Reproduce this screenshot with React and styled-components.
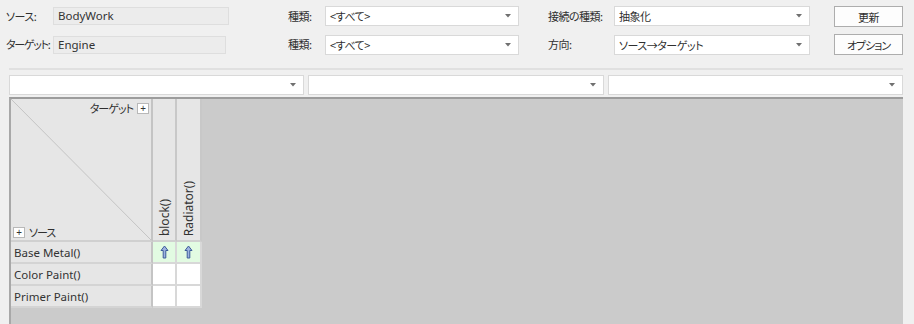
import styled, { createGlobalStyle } from "styled-components"

const Global = createGlobalStyle`
	html, body {
		margin: 0;
		background: #f0f0f0;
	}
	body {
		font-family: "Noto Sans", "Noto Sans CJK JP", sans-serif;
		font-size: 11.5px;
		color: #333;
		font-feature-settings: "palt";
	}
`

// Japanese runs are narrower in the original UI font
const Jp = styled.span`
	font-family: "Noto Sans CJK JP", sans-serif;
	font-size: 11px;
	letter-spacing: ${p => p.tight || "-0.5px"};
	white-space: nowrap;
	color: #2f2f2f;
`

const Arrow = () => (
	<svg width="9" height="14" viewBox="0 0 9 14">
		<path d="M4.5 1 L8 5.5 L5.8 5.5 L5.8 13 L3.2 13 L3.2 5.5 L1 5.5 Z" fill="#9db3e0" stroke="#3d5c9a" strokeWidth="1" strokeLinejoin="round" />
	</svg>
)

const Caret = () => (
	<svg width="6" height="4" viewBox="0 0 6 4">
		<path d="M0 0 L6 0 L3 3.5 Z" fill="#707070" />
	</svg>
)

const Combo = ({ children }) => (
	<ComboBox>
		<span>{children}</span>
		<Caret />
	</ComboBox>
)

const App = () => {
	const cols = ["block()", "Radiator()"]
	const rows = [
		{ name: "Base Metal()", links: [true, true] },
		{ name: "Color Paint()", links: [false, false] },
		{ name: "Primer Paint()", links: [false, false] },
	]

	return (
		<Page>
			<Global />
			<Form>
				<Group cols="47px 176px">
					<Label><Jp>ソース:</Jp></Label>
					<Field>BodyWork</Field>
					<Label><Jp tight="-1.3px">ターゲット:</Jp></Label>
					<Field narrow>Engine</Field>
				</Group>
				<Group cols="37px 194px" ml="59px">
					<Label><Jp>種類:</Jp></Label>
					<Combo><Jp>&lt;すべて&gt;</Jp></Combo>
					<Label><Jp>種類:</Jp></Label>
					<Combo><Jp>&lt;すべて&gt;</Jp></Combo>
				</Group>
				<Group cols="66px 196px" ml="29px">
					<Label><Jp>接続の種類:</Jp></Label>
					<Combo><Jp>抽象化</Jp></Combo>
					<Label><Jp>方向:</Jp></Label>
					<Combo><Jp>ソース→ターゲット</Jp></Combo>
				</Group>
				<Group cols="69px" ml="24px">
					<Button><Jp>更新</Jp></Button>
					<Button><Jp tight="-1px">オプション</Jp></Button>
				</Group>
			</Form>
			<Separator />
			<FilterRow>
				<Combo />
				<Combo />
				<Combo />
			</FilterRow>
			<MatrixArea>
				<Matrix>
					<Corner>
						<svg width="140" height="141" viewBox="0 0 140 141" preserveAspectRatio="none">
							<line x1="0" y1="0" x2="140" y2="141" stroke="#c4c4c4" strokeWidth="1" />
						</svg>
						<TargetTag>
							<Jp tight="-1px">ターゲット</Jp>
							<PlusBox>+</PlusBox>
						</TargetTag>
						<SourceTag>
							<PlusBox>+</PlusBox>
							<Jp tight="-1px">ソース</Jp>
						</SourceTag>
					</Corner>
					{cols.map(c => (
						<ColHead key={c}>
							<Vertical>{c}</Vertical>
						</ColHead>
					))}
					{rows.map(r => [
						<RowHead key={r.name}>{r.name}</RowHead>,
						...r.links.map((l, i) => (
							<Cell key={r.name + i} $linked={l}>
								{l && <Arrow />}
							</Cell>
						)),
					])}
				</Matrix>
			</MatrixArea>
		</Page>
	)
}

const Page = styled.div`
	width: 914px;
	height: 324px;
	overflow: hidden;
	display: flex;
	flex-direction: column;
`

const Form = styled.div`
	display: flex;
	padding: 6px 0 0 6px;
	height: 55px;
	box-sizing: border-box;
	flex-shrink: 0;
`

const Group = styled.div`
	display: grid;
	grid-template-columns: ${p => p.cols};
	grid-template-rows: 20px 21px;
	row-gap: 8px;
	align-items: center;
	margin-left: ${p => p.ml || 0};
`

const Label = styled.div`
	white-space: nowrap;
	line-height: 20px;
`

const Field = styled.div`
	height: 18px;
	width: ${p => (p.narrow ? "173px" : "176px")};
	box-sizing: border-box;
	border: 1px solid #dedede;
	background: #ececec;
	padding-left: 4px;
	line-height: 16px;
	color: #333;
`

const ComboBox = styled.div`
	height: 20px;
	box-sizing: border-box;
	border: 1px solid #d9d9d9;
	background: #fff;
	display: flex;
	align-items: center;
	justify-content: space-between;
	padding: 0 7px 0 4px;
	color: #333;
	flex: 1;
	span {
		white-space: nowrap;
	}
`

const Button = styled.div`
	height: 21px;
	box-sizing: border-box;
	border: 1px solid #adadad;
	background: #fdfdfd;
	display: flex;
	align-items: center;
	justify-content: center;
	align-self: start;
`

const Separator = styled.div`
	height: 2px;
	flex-shrink: 0;
	background: #e0e0e0;
	margin: 13px 11px 5px 9px;
`

const FilterRow = styled.div`
	display: flex;
	gap: 4px;
	margin: 0 11px 0 9px;
	flex-shrink: 0;
`

const MatrixArea = styled.div`
	flex: 1;
	margin: 2px 11px 0 9px;
	background: #cbcbcb;
	border-top: 2px solid #9c9c9c;
	border-left: 2px solid #a8a8a8;
`

const Matrix = styled.div`
	display: grid;
	grid-template-columns: 142px 24px 25px;
	grid-template-rows: 143px 22px 22px 22px;
	width: max-content;
`

const Corner = styled.div`
	position: relative;
	background: #e6e6e6;
	border-right: 2px solid #c4c4c4;
	border-bottom: 2px solid #d0d0d0;
	svg {
		display: block;
	}
`

const PlusBox = styled.span`
	display: inline-flex;
	align-items: center;
	justify-content: center;
	width: 12px;
	height: 11px;
	box-sizing: border-box;
	border: 1px solid #b8b8b8;
	background: #fff;
	font-size: 10px;
	line-height: 1;
	color: #333;
`

const TargetTag = styled.div`
	position: absolute;
	top: 1px;
	right: 2px;
	display: flex;
	align-items: center;
	gap: 4px;
`

const SourceTag = styled.div`
	position: absolute;
	bottom: 0;
	left: 2px;
	display: flex;
	align-items: center;
	gap: 4px;
`

const ColHead = styled.div`
	background: #e6e6e6;
	border-right: 2px solid #c8c8c8;
	border-bottom: 2px solid #d0d0d0;
	display: flex;
	align-items: flex-end;
	justify-content: center;
	padding-bottom: 4px;
	font-size: 12px;
`

const Vertical = styled.div`
	writing-mode: vertical-rl;
	transform: rotate(180deg);
	color: #333;
	white-space: nowrap;
`

const RowHead = styled.div`
	background: #e6e6e6;
	border-right: 2px solid #c4c4c4;
	border-bottom: 2px solid #d4d4d4;
	padding-left: 3px;
	display: flex;
	align-items: center;
	color: #333;
`

const Cell = styled.div`
	background: ${p => (p.$linked ? "#e2fbe2" : "#fff")};
	border-right: 2px solid #d8d8d8;
	border-bottom: 2px solid #d8d8d8;
	display: flex;
	align-items: center;
	justify-content: center;
`

export default App
